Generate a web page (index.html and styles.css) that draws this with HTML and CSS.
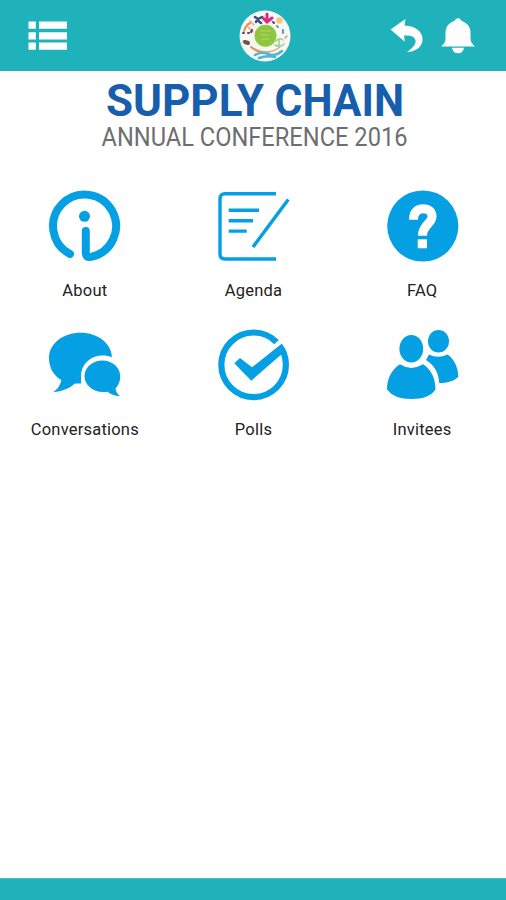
FILE: index.html
```html
<!DOCTYPE html>
<html lang="en">
<head>
<meta charset="utf-8">
<title>Supply Chain Annual Conference 2016</title>
<link rel="stylesheet" href="styles.css">
</head>
<body>
<header class="bar">
  <svg class="menu" viewBox="0 0 40 30"><path d="M.5.500h7.300v7.300H.5zM11 .5h28v7.300H11zM.5 11.200h7.300v7.300H.5zM11 11.200h28v7.300H11zM.5 21.500h7.300v7.300H.5zM11 21.500h28v7.300H11z"/></svg>
  <svg class="logo" viewBox="0 0 52 52">
    <circle cx="26" cy="26" r="25.5" fill="#f8f8f3"/>
    <g fill="none" stroke-linecap="round">
      <path d="M5 21q2-6 6-8M12 37q8 6 17 6" stroke="#ed8955" stroke-width="2"/>
      <path d="M9 17l5 5M4 31l5 2M11 11l4 4" stroke="#f3a37b" stroke-width="1.500"/>
      <path d="M16 45q6-4 13-1t14-3M20 48q8-3 16-1" stroke="#51b4d9" stroke-width="2.500"/>
      <path d="M22 41q10 3 19-4" stroke="#ef9c68" stroke-width="1.200"/>
      <path d="M37 31q3-4 7-1M36 35q5 3 9-1M40 29v6" stroke="#9bcf8c" stroke-width="1.500"/>
      <path d="M16 7l3 2 4-2M17 12l1-2 4 3" stroke="#36507f" stroke-width="2.500"/>
      <path d="M28 4v7M24 8l4 4 5-4" stroke="#df287e" stroke-width="3"/>
      <path d="M34 12l1 1M4 23h1M9 23h1M12 22l1-2" stroke="#633f72" stroke-width="2"/>
      <path d="M6 32l3 1" stroke="#655453" stroke-width="4"/>
      <path d="M44 20v3M38 16l1 1" stroke="#6494be" stroke-width="2"/>
      <path d="M46 28l2-2" stroke="#ec8a7c" stroke-width="1.500"/>
    </g>
    <circle cx="40.500" cy="10.500" r="3.300" fill="#f8c67e"/>
    <circle cx="26.500" cy="25.800" r="11" fill="#8fc63f"/>
    <path d="M21 21h11M22 25h8M23 29h7" stroke="#b5d768"/>
  </svg>
  <svg class="back" viewBox="0 0 34 34"><path d="M.5 11.500L15.500 1 14.500 7.500C26 8 33 14 32.500 22 32 29 26 33.500 17 34 24 29 27 25 25 21 23.500 18 20 17.500 14 17.500L14.800 23.700Z"/></svg>
  <svg class="bell" viewBox="0 0 34 36"><path d="M14.300 1.500Q17-1 19.700 1.500L20.500 3C26.500 5 29.500 9 29.500 15V20C29.500 24 31 26 34 28.500H0C3 26 4.500 24 4.500 20V15C4.500 9 7.500 5 13.500 3ZM11 29.700h12q-1 5.500-6 5.500t-6-5.500Z"/></svg>
</header>
<main class="content">
  <svg class="title" viewBox="0 0 506 84">
    <text class="title-main"><tspan x="106" y="44.500" textLength="158" lengthAdjust="spacingAndGlyphs">SUPPLY</tspan> <tspan x="274.500" y="44.500" textLength="129.500" lengthAdjust="spacingAndGlyphs">CHAIN</tspan></text>
    <text class="title-sub" x="101.500" y="74.500" textLength="306" lengthAdjust="spacingAndGlyphs">ANNUAL CONFERENCE 2016</text>
  </svg>
  <nav class="grid">
    <div class="item">
      <svg class="icon" viewBox="0 0 72 72"><path class="line" stroke-width="8" d="M22 64A31.500 31.500 0 1 1 43 66.900Q37.800 68 37.800 63V41"/><circle cx="36.500" cy="26.300" r="5.500"/></svg>
      <span class="label">About</span>
    </div>
    <div class="item">
      <svg class="icon" viewBox="0 0 72 72"><path class="line butt" stroke-width="3.400" d="M59 3.700H8Q3 3.700 3 8.700V64Q3 69 8 69H59M11.700 20.200H42M11.700 30.700H36M11.700 41.100H29.700M71.300 9.500L36 57"/></svg>
      <span class="label">Agenda</span>
    </div>
    <div class="item">
      <svg class="icon" viewBox="0 0 72 72"><circle cx="36.800" cy="36" r="35.600"/><path d="M27.500 29.700C27.500 22 31.500 18.700 37 18.700S46 21.500 46 26.500C46 34 36.500 34.500 36.500 45.700" fill="none" stroke="#fff" stroke-width="9"/><path d="M31.700 49.300h9.300v9h-9.300z" fill="#fff"/></svg>
      <span class="label">FAQ</span>
    </div>
    <div class="item">
      <svg class="icon" viewBox="0 0 72 72"><path d="M32.500 3.700C50 3.700 64 14.500 64 29S50 54.500 34 54.500H27Q19 62 5 63.300Q12.500 58 13.300 51C5.500 46.500 1 38.500 1 29 1 14.500 15 3.700 32.500 3.700Z"/><path class="gap" d="M33 56V47C33 35 43 26.500 54.500 26.500S75 34 75 46V70H42Z"/><path d="M54.300 31.500C64.500 31.500 72.200 38.500 72.200 47.300 72.200 53 70 57 67.500 59.500Q68 64 72 67.200Q64 66.500 59.500 62.700C47 65 36.500 57 36.500 47.300 36.500 38.500 44.500 31.500 54.300 31.500Z"/></svg>
      <span class="label">Conversations</span>
    </div>
    <div class="item">
      <svg class="icon" viewBox="0 0 72 72"><circle class="line" stroke-width="6.200" cx="36.600" cy="35.800" r="32.300"/><path class="gap" d="M48 24L66 7 70 15 35 41Z"/><path d="M17.300 34.300L23 29 35 38.300 65 14.500 68.500 21.700 34.300 51.700Z"/></svg>
      <span class="label">Polls</span>
    </div>
    <div class="item">
      <svg class="icon" viewBox="0 0 72 72"><ellipse cx="52.500" cy="12.300" rx="10.500" ry="11.300"/><path d="M40 31L43 25.500Q52 30 61.500 25.500C68 30 72.300 38 72.300 48Q66 54 53.300 54.300C52.500 43 48 36 40 31Z"/><ellipse cx="25.300" cy="19.700" rx="11.900" ry="13.800"/><path d="M14 35.300Q25 42.500 37 35.300C45 40.500 49.500 49 49.500 60.500Q43 70 25.500 70T1 60.500C1 49 6 40.500 14 35.300Z"/></svg>
      <span class="label">Invitees</span>
    </div>
  </nav>
</main>
<footer class="footer"></footer>
</body>
</html>
```
FILE: styles.css
```css
* { box-sizing: border-box; }
body {
  margin: 0;
  height: 900px;
  display: flex;
  flex-direction: column;
  background: #fff;
  font-family: Roboto, "Liberation Sans", sans-serif;
}
svg { display: block; flex: none; }
.bar {
  height: 71px;
  display: flex;
  align-items: flex-start;
  background: #20b2ba;
  border-bottom: 1px solid #2dabb7;
  fill: #fff;
}
.menu { width: 40px; height: 30px; margin: 21px 0 0 28px; }
.logo { width: 52px; height: 52px; margin: 10px 0 0 171px; }
.back { width: 34px; height: 34px; margin: 18px 0 0 99px; }
.bell { width: 34px; height: 36px; margin: 18px 0 0 17px; }
.content { flex: 1; }
.title { width: 506px; height: 84px; }
.title-main { font-size: 44px; font-weight: 700; fill: #175eac; }
.title-sub { font-size: 25px; fill: #6d6e70; }
.grid {
  margin-top: 35px;
  display: grid;
  grid-template-columns: repeat(3, 1fr);
  grid-auto-rows: 139px;
}
.item { display: flex; flex-direction: column; align-items: center; }
.icon { width: 72px; height: 72px; fill: #059fe4; overflow: visible; }
.line { fill: none; stroke: #059fe4; stroke-linecap: round; }
.butt { stroke-linecap: butt; }
.gap { fill: #fff; }
.label {
  margin-top: 18px;
  padding-left: 1px;
  font-size: 16.500px;
  line-height: 21px;
  color: #222;
  letter-spacing: 0.200px;
}
.footer { height: 22px; background: #20b2ba; border-top: 1px solid #52bdc6; }
```
